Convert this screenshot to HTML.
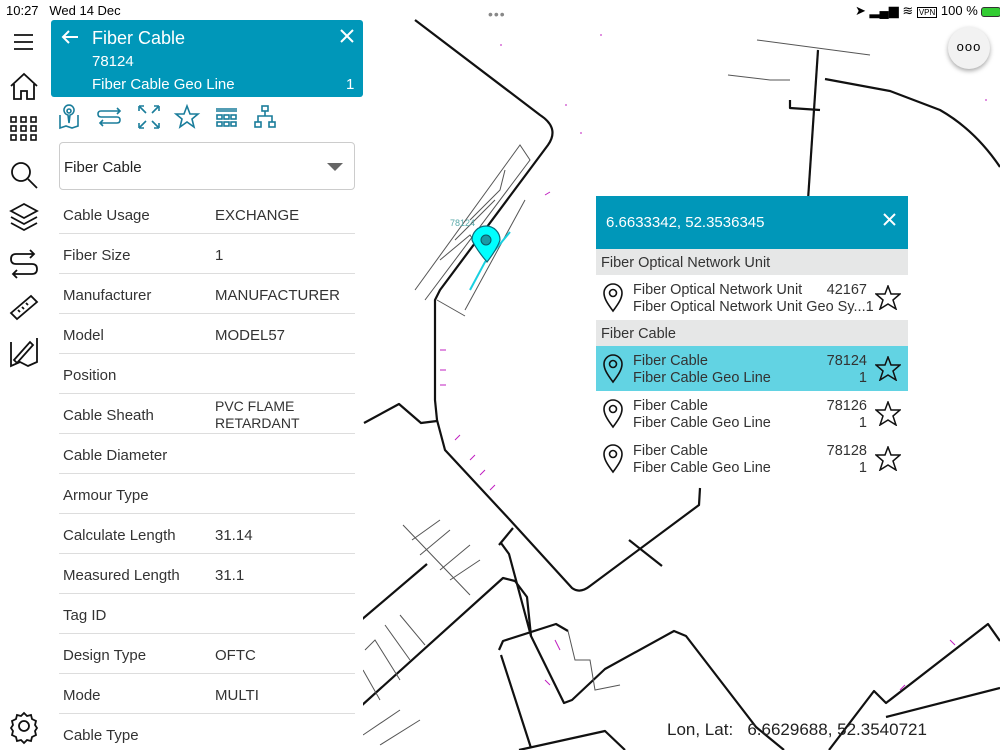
<!DOCTYPE html>
<html><head><meta charset="utf-8"><style>
*{margin:0;padding:0;box-sizing:border-box}
body{width:1000px;height:750px;overflow:hidden;background:#fff;font-family:"Liberation Sans",Arial,sans-serif;position:relative;color:#222}
.abs{position:absolute}
#hdr{left:51px;top:20px;width:312px;height:77px;background:#0097b9;border-radius:3px;color:#fff}
.row{position:absolute;left:59px;width:296px;height:40px;border-bottom:1px solid #ddd;font-size:15px;color:#333}
.row .l{position:absolute;left:4px;top:13px}
.row .v{position:absolute;left:156px;top:13px}
#pop{left:596px;top:196px;width:312px;background:#fff;font-size:14.5px;color:#333}
.sec{height:26px;background:#e6e7e7;padding:6px 0 0 5px;font-size:14.5px}
.it{position:relative;height:45px}
.it .a{position:absolute;left:37px;top:7px}
.it .b{position:absolute;left:37px;top:24px}
.it .n{position:absolute;right:41px;top:7px;text-align:right}
.it .m{position:absolute;right:41px;top:24px}
.it svg{position:absolute}
</style></head><body>
<svg class="abs" style="left:0;top:0" width="1000" height="750">
<g fill="none" stroke="#111" stroke-width="2.2" stroke-linejoin="round">
<path d="M415,20 L540,115 Q560,128 548,145 L440,290 L435,300 L435,400 L437,420 L445,450 L510,520 L572,588 Q580,594 590,586 L699,505 L700,488"/>
<path d="M818,50 L808,200"/>
<path d="M790,100 L790,108 L820,110"/>
<path d="M825,79 L890,91 L940,110 Q975,130 1000,167"/>
<path d="M360,621 L427,564"/>
<path d="M360,707 L503,578 L515,581 L527,597 L531,636 L564,703 L572,700 L605,669 L674,631 L686,636 L756,727 L784,750"/>
<path d="M499,545 L513,528 M501,543 L509,554 L531,636"/>
<path d="M499,650 L503,641 L556,624 L568,631 M501,655 L531,748"/>
<path d="M364,423 L399,404 L421,423 L437,421"/>
<path d="M629,540 L662,566"/>
<path d="M829,750 L874,691 L886,703 L988,624 L1000,641 M886,717 L1000,688"/>
<path d="M519,750 L605,731 L625,750"/>
</g>
<g fill="none" stroke="#555" stroke-width="1">
<path d="M415,290 L520,145 L530,160 L425,300"/>
<path d="M440,260 L470,235 L480,250 M455,240 L495,200 M470,220 L500,190 L505,170"/>
<path d="M465,310 L525,200 M437,300 L465,316"/>
<path d="M403,525 L470,595 M412,540 L440,520 M420,555 L450,530 M440,570 L470,545 M450,580 L480,560"/>
<path d="M365,650 L375,640 L400,680 M385,625 L410,660 M400,615 L425,645 M363,670 L380,700"/>
<path d="M728,75 L770,80 L790,80 M757,40 L870,55"/>
<path d="M363,735 L400,710 M380,745 L420,720"/>
<path d="M568,631 L575,660 L590,660 L595,690 L620,685"/>
</g>
<g stroke="#c020c0" stroke-width="1" fill="none"><path d="M455,440l5,-5M470,460l5,-5M480,475l5,-5M490,490l5,-5M440,350l6,0M440,370l6,0M440,385l6,0M500,45l2,0M565,105l2,0M600,35l2,0M580,133l2,0M545,195l5,-3M555,640l5,10M545,680l5,5M900,690l5,-5M950,640l5,5M985,100l2,0"/></g>
<path d="M470,290 L485,262 L510,232" fill="none" stroke="#19d0e0" stroke-width="2"/>
<path d="M487,262 C475,248 472,240 472,240 A14,14 0 1 1 500,240 C500,240 498,248 487,262Z" fill="#0ff" stroke="#0a6a7a" stroke-width="1.2"/>
<circle cx="486" cy="240" r="5" fill="#1a9aa6" stroke="#0a5a66"/>
<text x="450" y="226" font-size="9" fill="#5aaaaa" font-family="Liberation Sans">78124</text>
</svg>
<div class="abs" style="left:0;top:0;width:50px;height:750px;background:#fff"></div>
<div class="abs" style="left:50px;top:0;width:313px;height:750px;background:#fff"></div>
<div class="abs" style="left:6px;top:3px;font-size:13px;color:#000">10:27&nbsp;&nbsp; Wed 14 Dec</div>
<div class="abs" style="left:488px;top:6px;font-size:14px;color:#888;letter-spacing:1px">•••</div>
<div class="abs" style="left:855px;top:3px;font-size:13px;color:#000;white-space:nowrap">➤ ▂▄▆ ≋ <span style="border:1px solid #000;font-size:8px;padding:0 1px">VPN</span> 100 % <span style="display:inline-block;width:20px;height:10px;border:1px solid #333;border-radius:3px;vertical-align:middle;background:#3c3;"></span></div>
<div class="abs" style="left:948px;top:27px;width:42px;height:42px;border-radius:50%;background:#f2f2f2;box-shadow:0 2px 5px rgba(0,0,0,.35);text-align:center;line-height:40px;font-size:13px;letter-spacing:1px;color:#000">ooo</div>
<svg class="abs" style="left:0;top:0" width="50" height="750" fill="none" stroke="#111" stroke-width="1.8">
<path d="M14,35h19M14,42h19M14,49h19"/>
<path d="M11,86 L24,74 L37,86 M14,84 V99 H21 V91 H27 V99 H34 V84"/>
<g stroke-width="1.6"><rect x="11" y="117" width="5" height="5"/><rect x="21" y="117" width="5" height="5"/><rect x="31" y="117" width="5" height="5"/><rect x="11" y="126" width="5" height="5"/><rect x="21" y="126" width="5" height="5"/><rect x="31" y="126" width="5" height="5"/><rect x="11" y="135" width="5" height="5"/><rect x="21" y="135" width="5" height="5"/><rect x="31" y="135" width="5" height="5"/></g>
<circle cx="21" cy="172" r="9"/><path d="M28,179 L37,188"/>
<path d="M11,211 L24,204 L37,211 L24,218Z M11,217 L24,224 L37,217 M11,223 L24,230 L37,223"/>
<path d="M33,254 H16 Q11,254 11,259 Q11,264 16,264 H32 Q37,264 37,269 Q37,274 32,274 H13 M30,250 L34,254 L30,258 M17,270 L13,274 L17,278"/>
<path d="M11,313 L31,296 L37,302 L17,319Z M18,310 l2,2 M22,307 l2,2 M26,303 l2,2"/>
<path d="M11,342 L11,366 L20,362 L28,366 L37,362 V338 M14,360 L30,342 L33,345 L17,363Z"/>
<circle cx="24" cy="726" r="5"/><path d="M24,713 l3,3 l4,-1 l1,4 l4,2 l-1,4 l2,3 l-2,3 l1,4 l-4,2 l-1,4 l-4,-1 l-3,3 l-3,-3 l-4,1 l-1,-4 l-4,-2 l1,-4 l-2,-3 l2,-3 l-1,-4 l4,-2 l1,-4 l4,1z"/>
</svg>
<div id="hdr" class="abs">
<svg class="abs" style="left:10px;top:9px" width="18" height="16" fill="none" stroke="#fff" stroke-width="2"><path d="M17,8H2M8,2L2,8L8,14"/></svg>
<div class="abs" style="left:41px;top:8px;font-size:18px">Fiber Cable</div>
<div class="abs" style="left:41px;top:33px;font-size:15px">78124</div>
<div class="abs" style="left:41px;top:56px;font-size:15px">Fiber Cable Geo Line</div>
<div class="abs" style="left:295px;top:56px;font-size:15px">1</div>
<svg class="abs" style="left:289px;top:9px" width="14" height="14" stroke="#fff" stroke-width="2"><path d="M1,1L13,13M13,1L1,13"/></svg>
</div>
<svg class="abs" style="left:55px;top:103px" width="230" height="30" fill="none" stroke="#1a7d9b" stroke-width="1.6">
<path d="M5,12 L5,25 L11,23 L17,25 L23,23 L23,12 M15,12 a5,5 0 1 0 -2,0 L14,20Z"/><circle cx="14" cy="8" r="2"/>
<path d="M65,8H46Q43,8 43,11Q43,14 46,14H62Q65,14 65,17Q65,20 62,20H45M62,5L65,8L62,11M48,17L45,20L48,23"/>
<path d="M84,3h5M84,3v5M104,3h-5M104,3v5M84,25h5M84,25v-5M104,25h-5M104,25v-5M85,4l6,6M103,4l-6,6M85,24l6,-6M103,24l-6,-6"/>
<path d="M132,3 L135,11 L143,11 L137,16 L139,24 L132,19 L125,24 L127,16 L121,11 L129,11Z"/>
<path d="M161,6h21M161,8h21"/><rect x="162" y="12" width="5" height="4"/><rect x="169" y="12" width="5" height="4"/><rect x="176" y="12" width="5" height="4"/><rect x="162" y="19" width="5" height="4"/><rect x="169" y="19" width="5" height="4"/><rect x="176" y="19" width="5" height="4"/>
<rect x="207" y="3" width="6" height="5"/><rect x="200" y="19" width="6" height="5"/><rect x="214" y="19" width="6" height="5"/><path d="M210,8V13M203,19V13H217V19"/>
</svg>
<div class="abs" style="left:59px;top:142px;width:296px;height:48px;border:1px solid #ccc;border-radius:4px;font-size:15px;padding:16px 0 0 4px;color:#222">Fiber Cable
<div class="abs" style="right:11px;top:20px;width:0;height:0;border-left:8px solid transparent;border-right:8px solid transparent;border-top:8px solid #666"></div></div>
<div class="row" style="top:194px"><span class="l">Cable Usage</span><span class="v">EXCHANGE</span></div>
<div class="row" style="top:234px"><span class="l">Fiber Size</span><span class="v">1</span></div>
<div class="row" style="top:274px"><span class="l">Manufacturer</span><span class="v">MANUFACTURER</span></div>
<div class="row" style="top:314px"><span class="l">Model</span><span class="v">MODEL57</span></div>
<div class="row" style="top:354px"><span class="l">Position</span></div>
<div class="row" style="top:394px"><span class="l">Cable Sheath</span><span class="v" style="top:4px;font-size:14px;line-height:17px">PVC FLAME<br>RETARDANT</span></div>
<div class="row" style="top:434px"><span class="l">Cable Diameter</span></div>
<div class="row" style="top:474px"><span class="l">Armour Type</span></div>
<div class="row" style="top:514px"><span class="l">Calculate Length</span><span class="v">31.14</span></div>
<div class="row" style="top:554px"><span class="l">Measured Length</span><span class="v">31.1</span></div>
<div class="row" style="top:594px"><span class="l">Tag ID</span></div>
<div class="row" style="top:634px"><span class="l">Design Type</span><span class="v">OFTC</span></div>
<div class="row" style="top:674px"><span class="l">Mode</span><span class="v">MULTI</span></div>
<div class="row" style="top:714px;border:none"><span class="l">Cable Type</span></div>

<div id="pop" class="abs">
<div style="height:53px;background:#0097b9;color:#fff;font-size:15px;padding:18px 0 0 10px;position:relative">6.6633342, 52.3536345
<svg class="abs" style="right:12px;top:17px" width="13" height="13" stroke="#fff" stroke-width="2"><path d="M1,1L12,12M12,1L1,12"/></svg></div>
<div class="sec">Fiber Optical Network Unit</div>
<div class="it"><svg style="left:6px;top:8px" width="22" height="30" fill="none" stroke="#111" stroke-width="1.6"><path d="M11,28 C5,20 2,15 2,10 A9,9 0 0 1 20,10 C20,15 17,20 11,28Z"/><circle cx="11" cy="10" r="3.5"/></svg><span class="a">Fiber Optical Network Unit</span><span class="b">Fiber Optical Network Unit Geo Sy...1</span><span class="n">42167</span>
<svg style="right:7px;top:10px" width="26" height="25" fill="none" stroke="#111" stroke-width="1.5"><path d="M13,1 L16,9 L25,9 L18,15 L21,24 L13,19 L5,24 L8,15 L1,9 L10,9Z"/></svg></div>
<div class="sec">Fiber Cable</div>
<div class="it" style="background:#62d3e3"><svg style="left:6px;top:8px" width="22" height="30" fill="none" stroke="#111" stroke-width="1.6"><path d="M11,28 C5,20 2,15 2,10 A9,9 0 0 1 20,10 C20,15 17,20 11,28Z"/><circle cx="11" cy="10" r="3.5"/></svg><span class="a">Fiber Cable</span><span class="b">Fiber Cable Geo Line</span><span class="n">78124</span><span class="m">1</span>
<svg style="right:7px;top:10px" width="26" height="25" fill="none" stroke="#111" stroke-width="1.5"><path d="M13,1 L16,9 L25,9 L18,15 L21,24 L13,19 L5,24 L8,15 L1,9 L10,9Z"/></svg></div>
<div class="it"><svg style="left:6px;top:8px" width="22" height="30" fill="none" stroke="#111" stroke-width="1.6"><path d="M11,28 C5,20 2,15 2,10 A9,9 0 0 1 20,10 C20,15 17,20 11,28Z"/><circle cx="11" cy="10" r="3.5"/></svg><span class="a">Fiber Cable</span><span class="b">Fiber Cable Geo Line</span><span class="n">78126</span><span class="m">1</span>
<svg style="right:7px;top:10px" width="26" height="25" fill="none" stroke="#111" stroke-width="1.5"><path d="M13,1 L16,9 L25,9 L18,15 L21,24 L13,19 L5,24 L8,15 L1,9 L10,9Z"/></svg></div>
<div class="it"><svg style="left:6px;top:8px" width="22" height="30" fill="none" stroke="#111" stroke-width="1.6"><path d="M11,28 C5,20 2,15 2,10 A9,9 0 0 1 20,10 C20,15 17,20 11,28Z"/><circle cx="11" cy="10" r="3.5"/></svg><span class="a">Fiber Cable</span><span class="b">Fiber Cable Geo Line</span><span class="n">78128</span><span class="m">1</span>
<svg style="right:7px;top:10px" width="26" height="25" fill="none" stroke="#111" stroke-width="1.5"><path d="M13,1 L16,9 L25,9 L18,15 L21,24 L13,19 L5,24 L8,15 L1,9 L10,9Z"/></svg></div>
</div>
<div class="abs" style="left:667px;top:720px;font-size:17px;color:#222">Lon, Lat:&nbsp;&nbsp; 6.6629688, 52.3540721</div>
</body></html>
